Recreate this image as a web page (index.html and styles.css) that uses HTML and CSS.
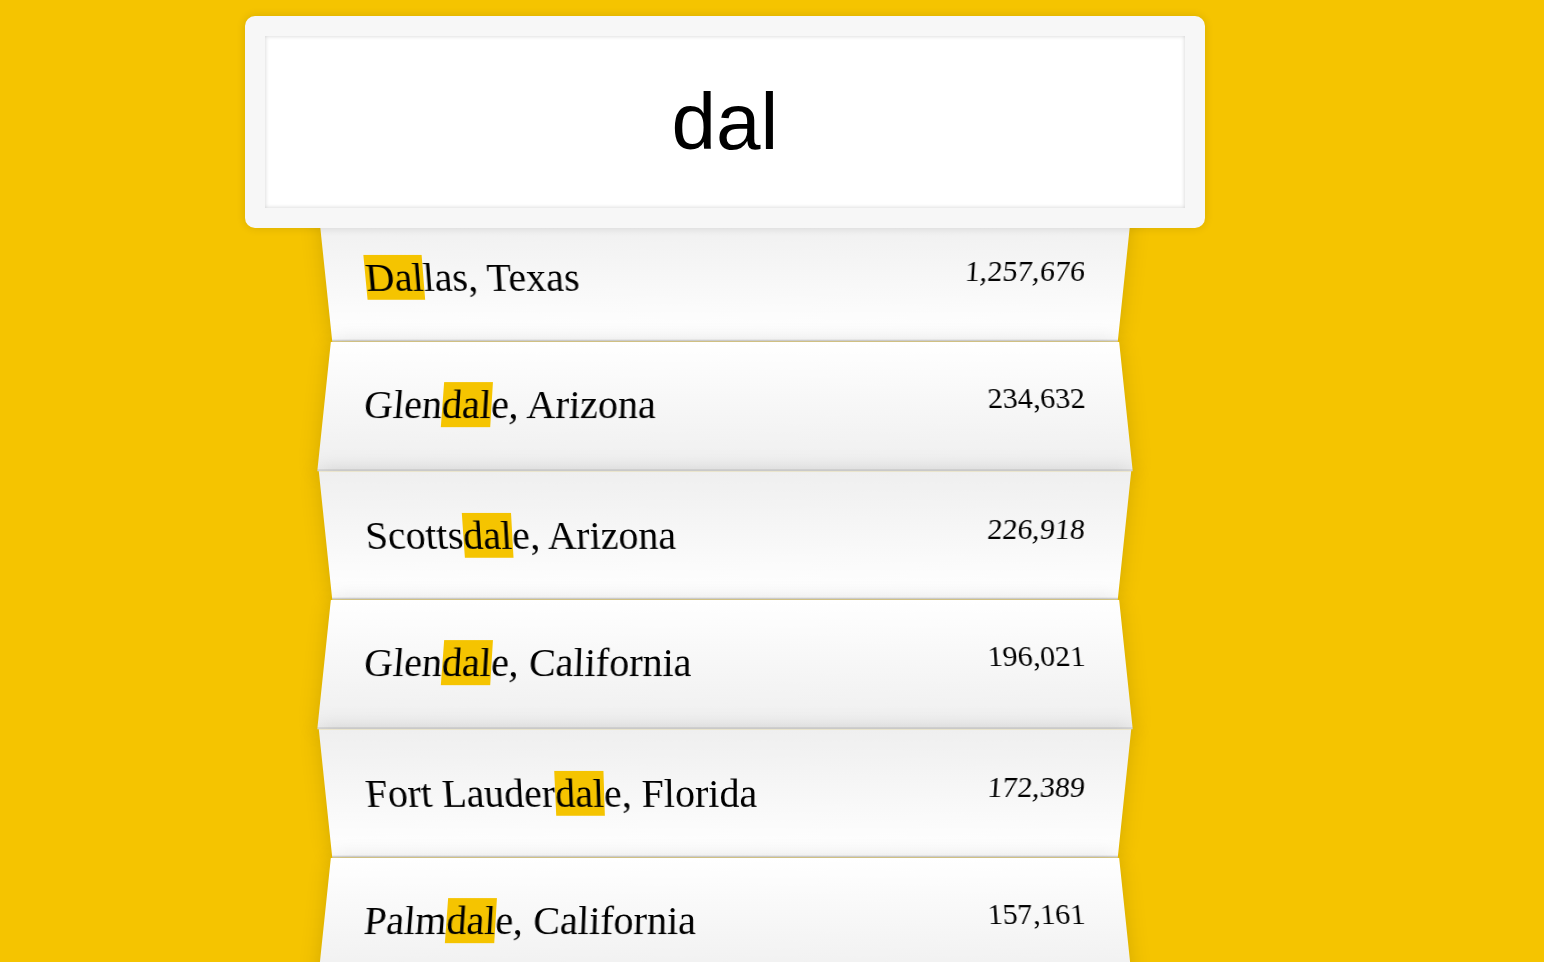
FILE: index.html
```html
<!DOCTYPE html>
<html lang="en">
<head>
<meta charset="UTF-8">
<title>Type Ahead</title>
<link rel="stylesheet" href="styles.css">
</head>
<body>
<form class="search-form">
  <input type="text" class="search" placeholder="City or State" value="dal">
  <ul class="suggestions">
    <li><span class="name"><span class="hl">Dal</span>las, Texas</span><span class="population">1,257,676</span></li>
    <li><span class="name">Glen<span class="hl">dal</span>e, Arizona</span><span class="population">234,632</span></li>
    <li><span class="name">Scotts<span class="hl">dal</span>e, Arizona</span><span class="population">226,918</span></li>
    <li><span class="name">Glen<span class="hl">dal</span>e, California</span><span class="population">196,021</span></li>
    <li><span class="name">Fort Lauder<span class="hl">dal</span>e, Florida</span><span class="population">172,389</span></li>
    <li><span class="name">Palm<span class="hl">dal</span>e, California</span><span class="population">157,161</span></li>
  </ul>
</form>
</body>
</html>
```
FILE: styles.css
```css
html {
  box-sizing: border-box;
  background: #f5c400;
  font-family: "Liberation Serif", "Times New Roman", serif;
  font-size: 40px;
}

*, *::before, *::after {
  box-sizing: inherit;
}

body {
  margin: 0;
  overflow: hidden;
}

.search-form {
  width: 800px;
  margin: 0 0 0 325px;
}

.search {
  display: block;
  position: relative;
  z-index: 2;
  width: 960px;
  margin: 16px 0 0 -80px;
  padding: 40px;
  text-align: center;
  outline: 0;
  border: 20px solid #f7f7f7;
  border-radius: 10px;
  font-family: "Liberation Sans", Arial, sans-serif;
  font-size: 80px;
  color: #000;
  background: #fff;
  box-shadow: 0 0 10px rgba(0, 0, 0, 0.12), inset 0 0 4px rgba(0, 0, 0, 0.19);
}

.suggestions {
  margin: -20px 0 0;
  padding: 0;
  position: relative;
}

.suggestions li {
  list-style: none;
  background: #fff;
  border-bottom: 2px solid #d8d8d8;
  box-shadow: 0 0 20px rgba(0, 0, 0, 0.14);
  margin: 0;
  padding: 40px;
  display: flex;
  justify-content: space-between;
}

.suggestions li:nth-child(even) {
  transform: perspective(200px) rotateX(3deg) translateY(4px) scale(1.001);
  background: linear-gradient(to bottom, #ffffff 0%, #efefef 100%);
}

.suggestions li:nth-child(odd) {
  transform: perspective(200px) rotateX(-3deg) translateY(6px);
  background: linear-gradient(to top, #ffffff 0%, #efefef 100%);
}

.population {
  font-size: 30px;
}

.hl {
  background: #f5c400;
}
```
